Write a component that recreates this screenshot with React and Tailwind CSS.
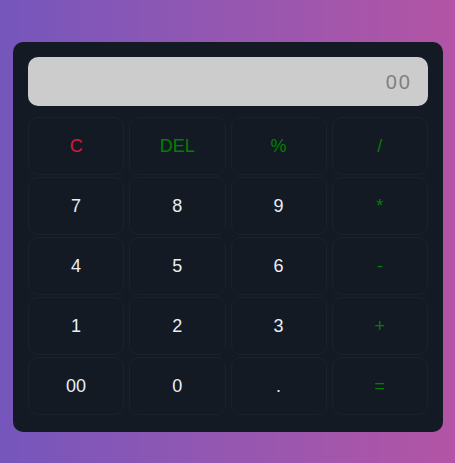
import React from 'react';

const keys = [
  ['C', 'text-[#dc143c]'], ['DEL', 'text-[#008000]'], ['%', 'text-[#008000]'], ['/', 'text-[#008000]'],
  ['7', 'text-[#e8eef7]'], ['8', 'text-[#e8eef7]'], ['9', 'text-[#e8eef7]'], ['*', 'text-[#008000]'],
  ['4', 'text-[#e8eef7]'], ['5', 'text-[#e8eef7]'], ['6', 'text-[#e8eef7]'], ['-', 'text-[#008000]'],
  ['1', 'text-[#e8eef7]'], ['2', 'text-[#e8eef7]'], ['3', 'text-[#e8eef7]'], ['+', 'text-[#008000]'],
  ['00', 'text-[#e8eef7]'], ['0', 'text-[#e8eef7]'], ['.', 'text-[#e8eef7]'], ['=', 'text-[#008000]'],
];

const App = () => {
  return (
    <div
      className="w-[455px] h-[463px] bg-gradient-to-r from-[#7556bc] to-[#b354a5] pt-[42px] pl-[13px]"
      style={{ fontFamily: '"Liberation Sans", Arial, sans-serif' }}
    >
      <div className="w-[430px] bg-[#141a23] rounded-[10px] px-[15px] pt-[15px] pb-[17px]">
        {/* Display */}
        <div className="h-[49px] bg-[#cccccc] rounded-[10px] mb-[11px] flex items-center justify-end pr-4">
          <span className="text-[20px] tracking-[2px] text-[#808080]">00</span>
        </div>

        {/* Keys */}
        <div className="grid grid-cols-4 gap-x-[5px] gap-y-[2px]">
          {keys.map(([label, color]) => (
            <button
              key={label}
              className={`h-[58px] rounded-[10px] bg-[#141a23] border border-[#1c2129] text-[18px] ${color}`}
            >
              {label}
            </button>
          ))}
        </div>
      </div>
    </div>
  );
};

export default App;
